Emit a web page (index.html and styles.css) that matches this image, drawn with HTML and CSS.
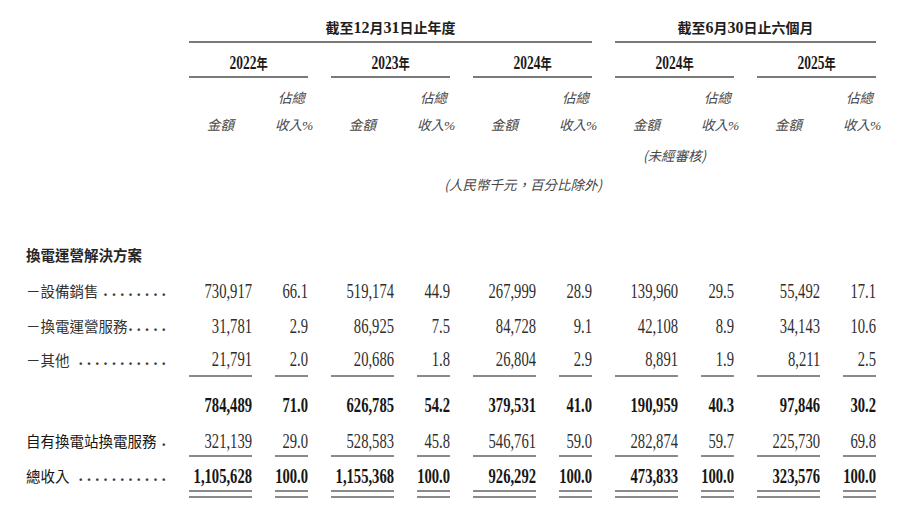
FILE: index.html
```html
<!DOCTYPE html>
<html lang="zh-Hant">
<head>
<meta charset="utf-8">
<title>收入明細</title>
<link rel="stylesheet" href="styles.css">
</head>
<body>
<div class="sheet">
  <div class="row r-top">
    <div class="c top span-a">截至<span class="lat">12</span>月<span class="lat">31</span>日止年度</div>
    <div class="c top span-b">截至<span class="lat">6</span>月<span class="lat">30</span>日止六個月</div>
  </div>
  <div class="row r-year">
    <div class="c yrc g1"><span class="yr">2022<span class="nian">年</span></span></div>
    <div class="c yrc g2"><span class="yr">2023<span class="nian">年</span></span></div>
    <div class="c yrc g3"><span class="yr">2024<span class="nian">年</span></span></div>
    <div class="c yrc g4"><span class="yr">2024<span class="nian">年</span></span></div>
    <div class="c yrc g5"><span class="yr">2025<span class="nian">年</span></span></div>
  </div>
  <div class="row r-h1 it">
    <div class="c p1">佔總</div>
    <div class="c p2">佔總</div>
    <div class="c p3">佔總</div>
    <div class="c p4">佔總</div>
    <div class="c p5">佔總</div>
  </div>
  <div class="row r-h2 it">
    <div class="c a1">金額</div><div class="c p1">收入<span class="pc">%</span></div>
    <div class="c a2">金額</div><div class="c p2">收入<span class="pc">%</span></div>
    <div class="c a3">金額</div><div class="c p3">收入<span class="pc">%</span></div>
    <div class="c a4">金額</div><div class="c p4">收入<span class="pc">%</span></div>
    <div class="c a5">金額</div><div class="c p5">收入<span class="pc">%</span></div>
  </div>
  <div class="row r-h3 it">
    <div class="c g4">(未經審核)</div>
  </div>
  <div class="row r-h4 it">
    <div class="c unit">(人民幣千元，百分比除外)</div>
  </div>
  <div class="row r-sec">
    <div class="lbl head">換電運營解決方案</div>
  </div>
  <div class="row r-1">
    <div class="lbl"><span>－設備銷售</span><span class="dots">........</span></div>
    <div class="v"><span class="n">730,917</span></div><div class="v"><span class="n">66.1</span></div>
    <div class="v"><span class="n">519,174</span></div><div class="v"><span class="n">44.9</span></div>
    <div class="v"><span class="n">267,999</span></div><div class="v"><span class="n">28.9</span></div>
    <div class="v"><span class="n">139,960</span></div><div class="v"><span class="n">29.5</span></div>
    <div class="v"><span class="n">55,492</span></div><div class="v"><span class="n">17.1</span></div>
  </div>
  <div class="row r-2">
    <div class="lbl"><span>－換電運營服務</span><span class="dots">.....</span></div>
    <div class="v"><span class="n">31,781</span></div><div class="v"><span class="n">2.9</span></div>
    <div class="v"><span class="n">86,925</span></div><div class="v"><span class="n">7.5</span></div>
    <div class="v"><span class="n">84,728</span></div><div class="v"><span class="n">9.1</span></div>
    <div class="v"><span class="n">42,108</span></div><div class="v"><span class="n">8.9</span></div>
    <div class="v"><span class="n">34,143</span></div><div class="v"><span class="n">10.6</span></div>
  </div>
  <div class="row r-3">
    <div class="lbl"><span>－其他</span><span class="dots">...........</span></div>
    <div class="v u"><span class="n">21,791</span></div><div class="v u"><span class="n">2.0</span></div>
    <div class="v u"><span class="n">20,686</span></div><div class="v u"><span class="n">1.8</span></div>
    <div class="v u"><span class="n">26,804</span></div><div class="v u"><span class="n">2.9</span></div>
    <div class="v u"><span class="n">8,891</span></div><div class="v u"><span class="n">1.9</span></div>
    <div class="v u"><span class="n">8,211</span></div><div class="v u"><span class="n">2.5</span></div>
  </div>
  <div class="row r-sub">
    <div class="lbl"></div>
    <div class="v"><span class="n b">784,489</span></div><div class="v"><span class="n b">71.0</span></div>
    <div class="v"><span class="n b">626,785</span></div><div class="v"><span class="n b">54.2</span></div>
    <div class="v"><span class="n b">379,531</span></div><div class="v"><span class="n b">41.0</span></div>
    <div class="v"><span class="n b">190,959</span></div><div class="v"><span class="n b">40.3</span></div>
    <div class="v"><span class="n b">97,846</span></div><div class="v"><span class="n b">30.2</span></div>
  </div>
  <div class="row r-own">
    <div class="lbl sec"><span>自有換電站換電服務</span><span class="dots">.</span></div>
    <div class="v u"><span class="n">321,139</span></div><div class="v u"><span class="n">29.0</span></div>
    <div class="v u"><span class="n">528,583</span></div><div class="v u"><span class="n">45.8</span></div>
    <div class="v u"><span class="n">546,761</span></div><div class="v u"><span class="n">59.0</span></div>
    <div class="v u"><span class="n">282,874</span></div><div class="v u"><span class="n">59.7</span></div>
    <div class="v u"><span class="n">225,730</span></div><div class="v u"><span class="n">69.8</span></div>
  </div>
  <div class="row r-tot">
    <div class="lbl sec"><span>總收入</span><span class="dots">...........</span></div>
    <div class="v dbl"><span class="n b">1,105,628</span></div><div class="v dbl"><span class="n b">100.0</span></div>
    <div class="v dbl"><span class="n b">1,155,368</span></div><div class="v dbl"><span class="n b">100.0</span></div>
    <div class="v dbl"><span class="n b">926,292</span></div><div class="v dbl"><span class="n b">100.0</span></div>
    <div class="v dbl"><span class="n b">473,833</span></div><div class="v dbl"><span class="n b">100.0</span></div>
    <div class="v dbl"><span class="n b">323,576</span></div><div class="v dbl"><span class="n b">100.0</span></div>
  </div>
</div>
</body>
</html>
```

FILE: styles.css
```css
html, body {
  margin: 0;
  padding: 0;
  background: #ffffff;
}

body {
  font-family: "Noto Sans CJK TC", "Noto Sans CJK SC", sans-serif;
  color: #2a2a2a;
  width: 909px;
  height: 516px;
  overflow: hidden;
}

.sheet {
  padding: 14px 0 0 26px;
}

.row {
  display: grid;
  grid-template-columns: 140px repeat(5, 63px 33px);
  column-gap: 23px;
}

.c {
  white-space: nowrap;
}

/* column placement */
.span-a { grid-column: 2 / 8; }
.span-b { grid-column: 8 / 12; }
.g1 { grid-column: 2 / 4; }
.g2 { grid-column: 4 / 6; }
.g3 { grid-column: 6 / 8; }
.g4 { grid-column: 8 / 10; }
.g5 { grid-column: 10 / 12; }
.a1 { grid-column: 2; }
.p1 { grid-column: 3; }
.a2 { grid-column: 4; }
.p2 { grid-column: 5; }
.a3 { grid-column: 6; }
.p3 { grid-column: 7; }
.a4 { grid-column: 8; }
.p4 { grid-column: 9; }
.a5 { grid-column: 10; }
.p5 { grid-column: 11; }

/* top header */
.r-top {
  line-height: 26px;
}
.top {
  text-align: center;
  font-size: 14px;
  font-weight: 700;
  color: #1e1e1e;
  border-bottom: 2px solid #7a7a7a;
}
.lat {
  font-family: "Liberation Serif", serif;
  font-size: 16px;
  font-weight: 700;
}

/* years */
.r-year {
  padding-top: 6px;
  line-height: 26px;
}
.yrc {
  text-align: center;
  border-bottom: 2px solid #7a7a7a;
}
.yr {
  display: inline-block;
  font-family: "Liberation Serif", serif;
  font-size: 18px;
  font-weight: 700;
  color: #1a1a1a;
  transform: scaleX(0.75);
}
.nian {
  font-family: "Noto Sans CJK TC", sans-serif;
  font-size: 15px;
}

/* italic sub-headers */
.it {
  font-style: italic;
  font-size: 13.5px;
  color: #474747;
}
.it .c {
  text-align: center;
}
.pc {
  font-family: "Liberation Serif", serif;
  font-size: 13.5px;
}
.r-h1 {
  padding-top: 6px;
  line-height: 26px;
}
.r-h2 {
  line-height: 28px;
}
.r-h3 {
  line-height: 30px;
}
.r-h4 {
  line-height: 28px;
}
.it .unit {
  grid-column: 2 / 8;
  justify-self: end;
  margin-right: -10px;
  font-size: 13.5px;
}

/* labels */
.lbl {
  display: flex;
  justify-content: space-between;
  white-space: nowrap;
  font-size: 14.5px;
  color: #333333;
}
.lbl.head {
  font-weight: 700;
  color: #262626;
}
.lbl.sec {
  color: #161616;
}
.r-sec .lbl {
  grid-column: 1 / -1;
}
.dots {
  font-family: "Liberation Serif", serif;
  font-size: 16px;
  font-weight: 700;
  letter-spacing: 4.3px;
  margin-right: -4px;
  color: #3a3a3a;
}

/* values */
.v {
  display: flex;
  justify-content: flex-end;
}
.n {
  display: inline-block;
  white-space: nowrap;
  font-family: "Liberation Serif", serif;
  font-size: 20px;
  color: #2e2e2e;
  transform: scaleX(0.73);
  transform-origin: 100% 50%;
}
.n.b {
  font-weight: 700;
  color: #161616;
}
.u {
  border-bottom: 2px solid #8a8a8a;
}
.dbl {
  padding-bottom: 8px;
  background-image: linear-gradient(#8a8a8a, #8a8a8a), linear-gradient(#8a8a8a, #8a8a8a);
  background-repeat: no-repeat;
  background-size: 100% 2px, 100% 2px;
  background-position: 0 calc(100% - 6px), 0 100%;
}

/* row rhythm */
.r-sec {
  padding-top: 42px;
  line-height: 29px;
}
.r-1 {
  padding-top: 5px;
  line-height: 34px;
}
.r-2 {
  line-height: 36px;
}
.r-3 {
  line-height: 31px;
}
.r-sub {
  padding-top: 11px;
  line-height: 34px;
}
.r-own {
  padding-top: 5px;
  line-height: 28px;
}
.r-tot {
  padding-top: 5px;
  line-height: 28px;
}
```
